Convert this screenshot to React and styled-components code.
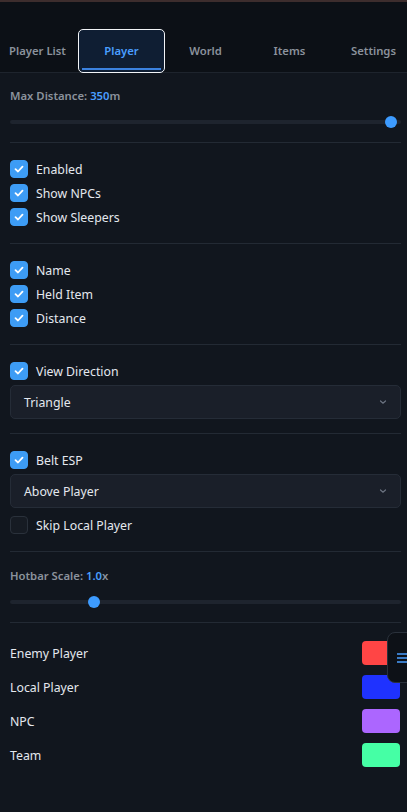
import React from 'react'
import styled, { createGlobalStyle } from 'styled-components'

const GlobalStyle = createGlobalStyle`
  html, body {
    margin: 0;
    padding: 0;
    background: #11161e;
  }
  * { box-sizing: border-box; }
  body {
    font-family: "Noto Sans", "Open Sans", sans-serif;
  }
`

const tabs = ['Player List', 'Player', 'World', 'Items', 'Settings']

const colors = [
  { name: 'Enemy Player', color: '#ff4545' },
  { name: 'Local Player', color: '#1f32ff' },
  { name: 'NPC', color: '#ac66ff' },
  { name: 'Team', color: '#45ffa5' },
]

const Check = ({ checked, label }) => (
  <CheckRow>
    <Box checked={checked}>
      {checked && (
        <svg width="12" height="12" viewBox="0 0 12 12">
          <path d="M2.5 6.2 L5 8.5 L9.5 3.6" fill="none" stroke="#fff" strokeWidth="1.8" strokeLinecap="round" strokeLinejoin="round" />
        </svg>
      )}
    </Box>
    <CheckText>{label}</CheckText>
  </CheckRow>
)

const Slider = ({ label, value, unit, pct }) => (
  <>
    <SliderLabel>
      {label}: <Value>{value}</Value>{unit}
    </SliderLabel>
    <TrackArea>
      <Track>
        <Thumb style={{ left: `calc(${pct} * (100% - 12px))` }} />
      </Track>
    </TrackArea>
  </>
)

const Select = ({ value }) => (
  <SelectBox>
    <span>{value}</span>
    <svg width="10" height="10" viewBox="0 0 10 10">
      <path d="M2.5 4 L5 6.3 L7.5 4" fill="none" stroke="#6b7380" strokeWidth="1.2" strokeLinecap="round" />
    </svg>
  </SelectBox>
)

export default function App() {
  return (
    <Page>
      <GlobalStyle />
      <TopStrip />
      <Header>
        <TabRow>
          {tabs.map(t => (
            <Tab key={t} active={t === 'Player'}>{t}</Tab>
          ))}
        </TabRow>
      </Header>
      <Content>
        <Slider label="Max Distance" value="350" unit="m" pct={0.99} />
        <Divider />
        <Check checked label="Enabled" />
        <Check checked label="Show NPCs" />
        <Check checked label="Show Sleepers" />
        <Divider />
        <Check checked label="Name" />
        <Check checked label="Held Item" />
        <Check checked label="Distance" />
        <Divider />
        <Check checked label="View Direction" />
        <Select value="Triangle" />
        <Divider />
        <Check checked label="Belt ESP" />
        <Select value="Above Player" />
        <Spaced>
          <Check label="Skip Local Player" />
        </Spaced>
        <Divider />
        <Lowered>
          <Slider label="Hotbar Scale" value="1.0" unit="x" pct={0.206} />
        </Lowered>
        <Divider bottom={13} />
        {colors.map(c => (
          <ColorRow key={c.name}>
            <ColorName>{c.name}</ColorName>
            <Swatch color={c.color} />
          </ColorRow>
        ))}
      </Content>
      <FloatButton>
        <svg width="14" height="12" viewBox="0 0 14 12">
          <path d="M1 2 H14 M1 6 H14 M1 10 H14" stroke="#4a9eff" strokeWidth="1.3" />
        </svg>
      </FloatButton>
    </Page>
  )
}

const Page = styled.div`
  position: relative;
  min-height: 100vh;
  background: #11161e;
  overflow: hidden;
`

const TopStrip = styled.div`
  height: 2px;
  background: #3d2d2d;
`

const Header = styled.div`
  background: #0c1016;
  padding-top: 27px;
  border-bottom: 1px solid #1e242d;
`

const TabRow = styled.div`
  display: flex;
  margin-left: -4.5px;
`

const Tab = styled.div`
  position: relative;
  flex: 0 0 87px;
  margin: 0 -1.5px;
  height: 44px;
  margin-bottom: -1px;
  padding-bottom: 1px;
  display: flex;
  align-items: center;
  justify-content: center;
  font-size: 11.3px;
  font-weight: 600;
  color: ${p => (p.active ? '#4a9eff' : '#8b929c')};
  background: ${p => (p.active ? '#0f1e33' : 'transparent')};
  border: 1px solid ${p => (p.active ? '#f2f4f7' : 'transparent')};
  border-radius: 5px;
  z-index: ${p => (p.active ? 1 : 0)};

  &::after {
    content: '';
    display: ${p => (p.active ? 'block' : 'none')};
    position: absolute;
    left: 3px;
    right: 3px;
    bottom: 2px;
    height: 2px;
    background: #3b82e0;
  }
`

const Content = styled.div`
  padding: 15px 6px 0 10px;
`

const SliderLabel = styled.div`
  font-size: 11.3px;
  line-height: 16px;
  font-weight: 600;
  color: #8b929c;
`

const Value = styled.span`
  color: #4a9eff;
`

const TrackArea = styled.div`
  margin-top: 12px;
  height: 12px;
  display: flex;
  align-items: center;
`

const Track = styled.div`
  position: relative;
  flex: 1;
  height: 4px;
  border-radius: 2px;
  background: #1e242e;
`

const Thumb = styled.div`
  position: absolute;
  top: -4px;
  width: 12px;
  height: 12px;
  border-radius: 50%;
  background: #3d9bff;
`

const Divider = styled.div`
  height: 1px;
  background: #232a34;
  margin: 14px 0 ${p => p.bottom ?? 14}px;
`

const CheckRow = styled.label`
  display: flex;
  align-items: center;
  gap: 8px;
  height: 24px;
`

const Box = styled.span`
  width: 18px;
  height: 18px;
  border-radius: 4px;
  display: flex;
  align-items: center;
  justify-content: center;
  background: ${p => (p.checked ? '#3d9cf5' : '#161b23')};
  border: 1px solid ${p => (p.checked ? '#3d9cf5' : '#2a313b')};
`

const CheckText = styled.span`
  font-size: 12.3px;
  color: #e4e8ee;
`

const SelectBox = styled.div`
  margin-top: 2px;
  height: 34px;
  display: flex;
  align-items: center;
  justify-content: space-between;
  padding: 0 12px 0 13px;
  background: #1a1f29;
  border: 1px solid #252c37;
  border-radius: 5px;
  font-size: 12.3px;
  color: #e4e8ee;
`

const Spaced = styled.div`
  margin-top: 5px;
`

const Lowered = styled.div`
  padding-top: 2px;
`

const ColorRow = styled.div`
  display: flex;
  align-items: center;
  justify-content: space-between;
  height: 34px;
  padding-right: 1px;
`

const ColorName = styled.span`
  font-size: 12.3px;
  color: #e4e8ee;
`

const Swatch = styled.div`
  width: 38px;
  height: 24px;
  border-radius: 4px;
  background: ${p => p.color};
`

const FloatButton = styled.div`
  position: absolute;
  left: 387px;
  top: 632px;
  width: 40px;
  height: 51px;
  background: #0d1117;
  border: 1px solid #2a313b;
  border-radius: 8px;
  display: flex;
  align-items: center;
  padding-left: 8px;
`
